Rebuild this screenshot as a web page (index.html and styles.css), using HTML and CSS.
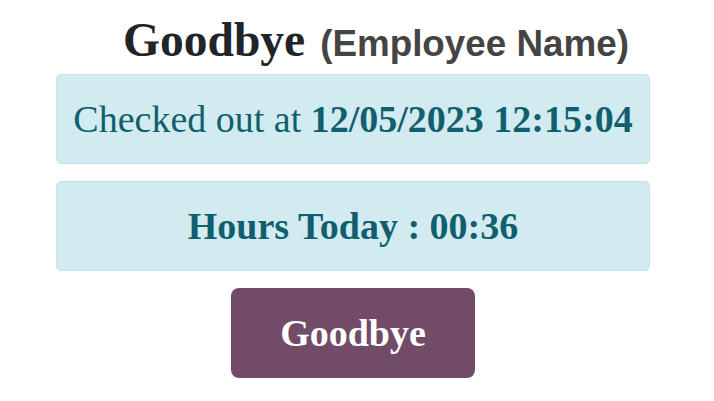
FILE: index.html
```html
<!DOCTYPE html>
<html>
<head>
<meta charset="utf-8">
<link rel="stylesheet" href="styles.css">
</head>
<body>
<div class="wrap">
  <h1 class="title"><span class="greet">Goodbye</span><span class="name">(Employee Name)</span></h1>
  <div class="alert"><span>Checked out at <b>12/05/2023 12:15:04</b></span></div>
  <div class="alert"><b>Hours Today : 00:36</b></div>
  <div class="actions"><button class="btn">Goodbye</button></div>
</div>
</body>
</html>
```
FILE: styles.css
```css
html, body { margin: 0; padding: 0; background: #fff; }
.wrap {
  width: 594px;
  margin-left: 56px;
  padding-top: 10px;
  display: flex;
  flex-direction: column;
  gap: 17px;
  font-family: "Liberation Serif", "Times New Roman", serif;
}
.title {
  margin: 0 0 -13px 0;
  height: 60px;
  display: flex;
  align-items: baseline;
  justify-content: center;
  gap: 15px;
  padding-left: 46px;
  line-height: 60px;
  font-weight: bold;
}
.greet { font-size: 47.5px; color: #212529; }
.name { font-family: "Liberation Sans", Arial, sans-serif; font-size: 36.8px; color: #444; }
.alert {
  box-sizing: border-box;
  height: 90px;
  display: flex;
  align-items: center;
  justify-content: center;
  background: #d1ebf0;
  border: 1px solid #bee5eb;
  border-radius: 5px;
  color: #115f6e;
  font-size: 38px;
}
.actions { display: flex; justify-content: center; }
.btn {
  width: 244px;
  height: 90px;
  border: none;
  border-radius: 8px;
  background: #714b67;
  color: #fff;
  font-family: "Liberation Serif", "Times New Roman", serif;
  font-weight: bold;
  font-size: 38px;
}
```
